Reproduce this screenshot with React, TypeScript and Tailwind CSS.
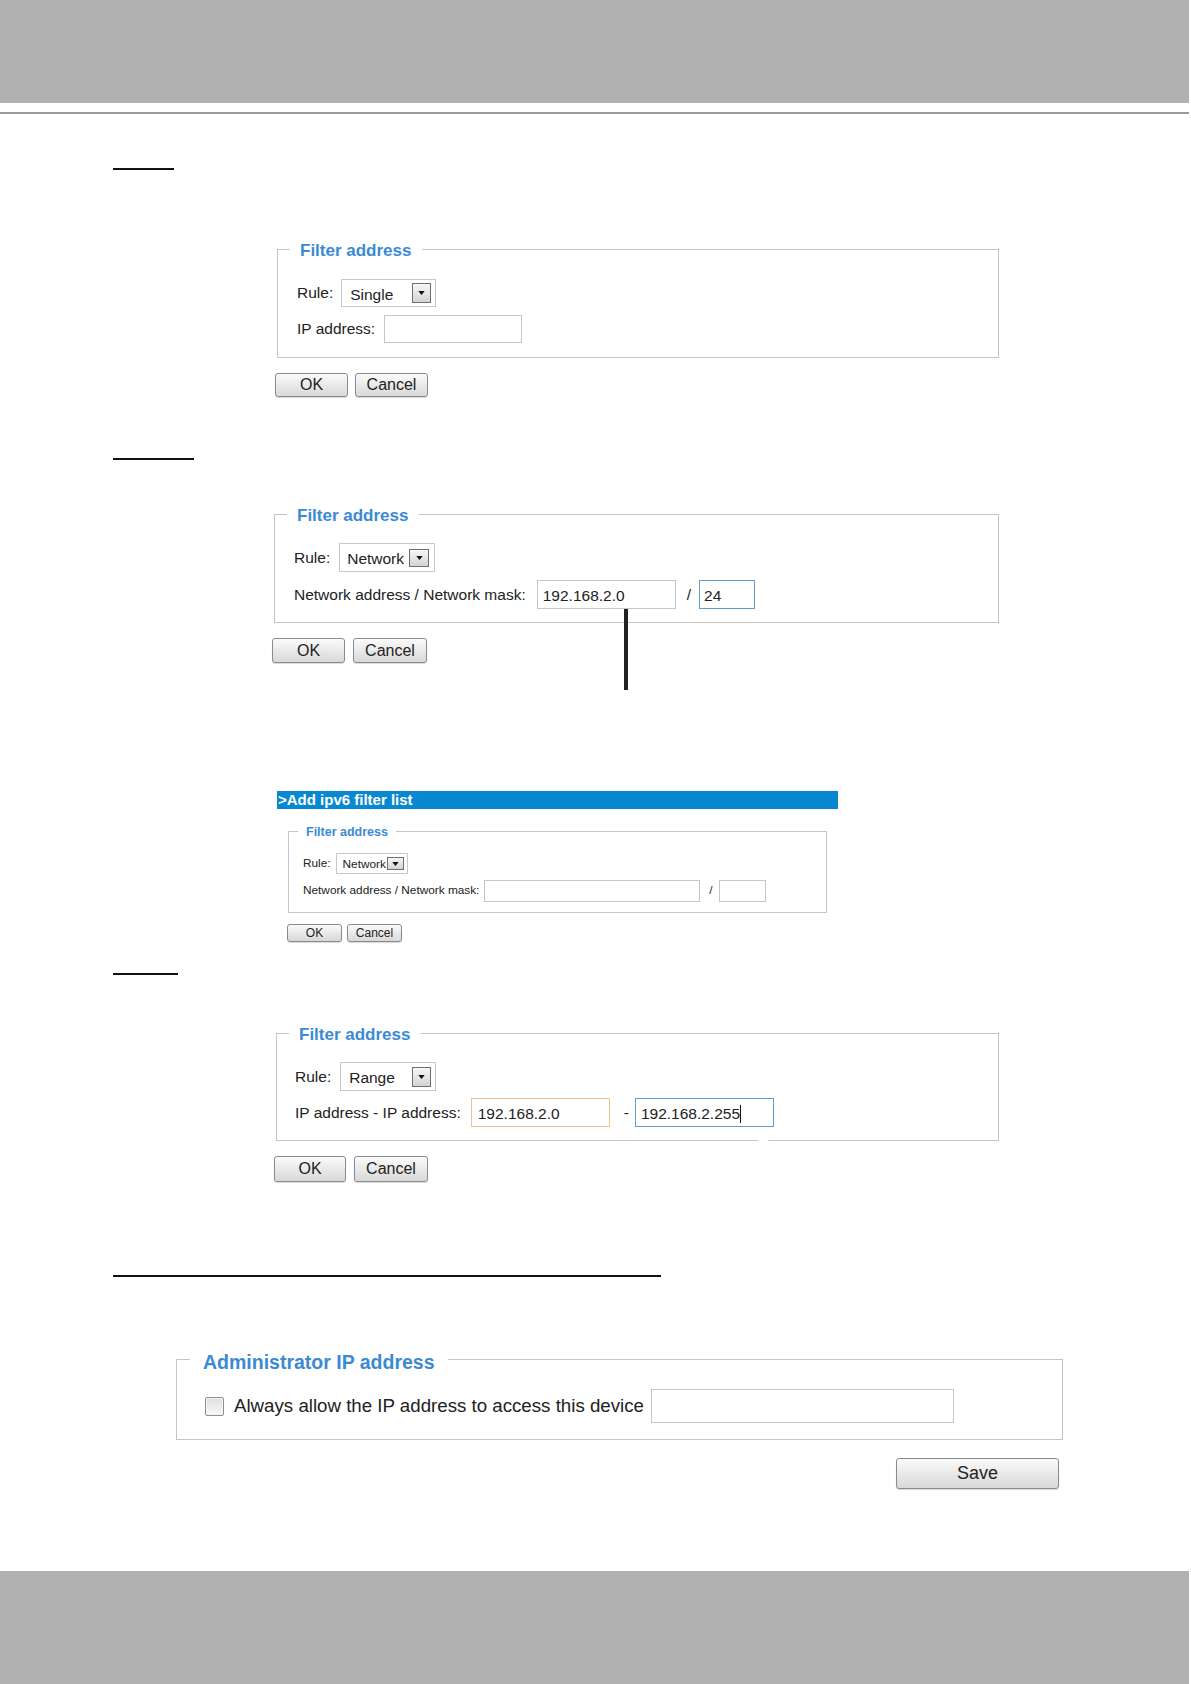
import React from 'react';

function Arrow({ cls }: { cls: string }) {
  return (
    <span
      className={`flex shrink-0 items-center justify-center border border-[#6f6f6f] bg-linear-to-b from-[#f7f7f7] to-[#d4d4d4] ${cls}`}
    >
      <svg viewBox="0 0 8 5" className="w-[7px] h-[4px]">
        <polygon points="0,0 8,0 4,5" fill="#111" />
      </svg>
    </span>
  );
}

function Select({
  text,
  cls,
  textCls,
  arrowCls,
}: {
  text: string;
  cls: string;
  textCls: string;
  arrowCls: string;
}) {
  return (
    <div className={`flex items-center border border-[#c8c8c8] bg-white ${cls}`}>
      <span className={`flex-1 overflow-hidden whitespace-nowrap ${textCls}`}>{text}</span>
      <Arrow cls={arrowCls} />
    </div>
  );
}

function Btn({ children, cls }: { children: React.ReactNode; cls: string }) {
  return (
    <button
      className={`flex items-center justify-center border border-[#8a8a8a] rounded-[3px] bg-linear-to-b from-[#fbfbfb] to-[#d8d8d8] text-[#222] shadow-[0_1px_1px_rgba(0,0,0,0.15)] ${cls}`}
    >
      {children}
    </button>
  );
}

export default function App() {
  return (
    <div className="w-[1191px] min-h-[1684px] bg-white flex flex-col font-['Liberation_Sans',Arial,sans-serif] text-[#222]">
      {/* top band */}
      <div className="h-[103px] mr-[2px] bg-[#b1b1b1]" />
      <div className="mt-[9px] mr-[2px] h-[2px] bg-[#9a9a9a]" />

      {/* Single */}
      <div className="mt-[54px] ml-[113px] w-[61px] h-[2px] bg-[#111]" />
      <div className="ml-[275px]">
        <fieldset className="ml-[2px] mt-[69px] w-[722px] border border-[#c4c4c4]">
          <legend className="ml-[12px] px-[10px] text-[17px] leading-[20px] font-bold text-[#3b8ad4]">
            <span className="relative top-[2px]">Filter address</span>
          </legend>
          <div className="pt-[20px] pb-[14px] pl-[19px] text-[15.5px]">
            <div className="flex items-center h-[28px]">
              <span>Rule:</span>
              <Select
                text="Single"
                cls="ml-[8px] w-[95px] h-[28px]"
                textCls="pl-[8px] pt-[3px]"
                arrowCls="w-[19px] h-[20px] mr-[4px]"
              />
            </div>
            <div className="flex items-center mt-[8px] h-[28px]">
              <span>IP address:</span>
              <div className="ml-[9px] w-[138px] h-[28px] border border-[#c6c6c6] bg-white" />
            </div>
          </div>
        </fieldset>
        <div className="flex gap-[7px] mt-[15px] text-[16px]">
          <Btn cls="w-[73px] h-[24px]">OK</Btn>
          <Btn cls="w-[73px] h-[24px]">Cancel</Btn>
        </div>
      </div>

      {/* Network */}
      <div className="mt-[61px] ml-[113px] w-[81px] h-[2px] bg-[#111]" />
      <div className="ml-[272px]">
        <fieldset className="ml-[2px] mt-[44px] w-[725px] border border-[#c4c4c4]">
          <legend className="ml-[12px] px-[10px] text-[17px] leading-[20px] font-bold text-[#3b8ad4]">
            <span className="relative top-[2px]">Filter address</span>
          </legend>
          <div className="pt-[19px] pb-[13px] pl-[19px] text-[15.5px]">
            <div className="flex items-center h-[29px]">
              <span>Rule:</span>
              <Select
                text="Network"
                cls="ml-[9px] w-[96px] h-[29px]"
                textCls="pl-[7px] pt-[2px]"
                arrowCls="w-[20px] h-[18px] mr-[5px]"
              />
            </div>
            <div className="flex items-center mt-[8px] h-[29px]">
              <span>Network address / Network mask:</span>
              <div className="relative ml-[11px] w-[139px] h-[29px] border border-[#c6c6c6] bg-white flex items-center pl-[5px] pt-[3px]">
                192.168.2.0
                <span className="absolute left-[86px] top-[28px] w-[4px] h-[81px] bg-[#222]" />
              </div>
              <span className="ml-[11px]">/</span>
              <div className="ml-[8px] w-[56px] h-[29px] border border-[#5a9fd8] bg-white flex items-center pl-[4px] pt-[3px]">
                24
              </div>
            </div>
          </div>
        </fieldset>
        <div className="flex gap-[8px] mt-[15px] text-[16px]">
          <Btn cls="w-[73px] h-[25px]">OK</Btn>
          <Btn cls="w-[74px] h-[25px]">Cancel</Btn>
        </div>
      </div>

      {/* ipv6 */}
      <div className="mt-[128px] ml-[277px] w-[561px] h-[18px] bg-[#0788d0] text-white text-[15px] leading-[18px] font-bold pl-[1px]">
        &gt;Add ipv6 filter list
      </div>
      <fieldset className="ml-[288px] mt-[15px] w-[539px] border border-[#c4c4c4]">
        <legend className="ml-[9px] px-[8px] text-[12.5px] leading-[15px] font-bold text-[#3b8ad4]">
          <span className="relative top-[1px]">Filter address</span>
        </legend>
        <div className="pt-[14px] pb-[10px] pl-[14px] text-[11.8px]">
          <div className="flex items-center h-[21px]">
            <span>Rule:</span>
            <Select
              text="Network"
              cls="ml-[5px] w-[72px] h-[21px]"
              textCls="pl-[6px] pt-[2px]"
              arrowCls="w-[17px] h-[13px] mr-[3px]"
            />
          </div>
          <div className="flex items-center mt-[6px] h-[22px]">
            <span>Network address / Network mask:</span>
            <div className="ml-[5px] w-[216px] h-[22px] border border-[#c6c6c6] bg-white" />
            <span className="ml-[9px]">/</span>
            <div className="ml-[6px] w-[47px] h-[22px] border border-[#c6c6c6] bg-white" />
          </div>
        </div>
      </fieldset>
      <div className="flex gap-[5px] ml-[287px] mt-[11px] text-[12px]">
        <Btn cls="w-[55px] h-[18px]">OK</Btn>
        <Btn cls="w-[55px] h-[18px]">Cancel</Btn>
      </div>

      {/* Range */}
      <div className="mt-[31px] ml-[113px] w-[65px] h-[2px] bg-[#111]" />
      <div className="ml-[274px]">
        <fieldset className="relative ml-[2px] mt-[48px] w-[723px] border border-[#c4c4c4]">
          <legend className="ml-[12px] px-[10px] text-[17px] leading-[20px] font-bold text-[#3b8ad4]">
            <span className="relative top-[2px]">Filter address</span>
          </legend>
          <div className="pt-[19px] pb-[13px] pl-[18px] text-[15.5px]">
            <div className="flex items-center h-[29px]">
              <span>Rule:</span>
              <Select
                text="Range"
                cls="ml-[9px] w-[96px] h-[29px]"
                textCls="pl-[8px] pt-[3px]"
                arrowCls="w-[19px] h-[20px] mr-[4px]"
              />
            </div>
            <div className="flex items-center mt-[7px] h-[29px]">
              <span>IP address - IP address:</span>
              <div className="ml-[10px] w-[139px] h-[29px] border border-[#f0c08e] bg-white flex items-center pl-[6px] pt-[3px]">
                192.168.2.0
              </div>
              <span className="ml-[14px]">-</span>
              <div className="ml-[6px] w-[139px] h-[29px] border border-[#5a9fd8] bg-white flex items-center pl-[5px] pt-[3px]">
                192.168.2.255
                <span className="inline-block w-[1px] h-[18px] bg-[#111]" />
              </div>
            </div>
          </div>
          <span className="absolute left-[481px] bottom-[-1px] w-[10px] h-[1px] bg-white" />
        </fieldset>
        <div className="flex gap-[8px] mt-[15px] text-[16px]">
          <Btn cls="w-[72px] h-[26px]">OK</Btn>
          <Btn cls="w-[74px] h-[26px]">Cancel</Btn>
        </div>
      </div>

      {/* Administrator IP address */}
      <div className="mt-[93px] ml-[113px] w-[548px] h-[2px] bg-[#111]" />
      <div className="ml-[176px] w-[887px]">
        <fieldset className="mt-[70px] w-[887px] border border-[#c4c4c4]">
          <legend className="ml-[13px] px-[13px] text-[19.5px] leading-[24px] font-bold text-[#3b8ad4]">
            <span className="relative top-[3px]">Administrator IP address</span>
          </legend>
          <div className="pt-[18px] pb-[16px] pl-[28px] flex items-center text-[18.7px]">
            <span className="w-[19px] h-[19px] rounded-[2px] border border-[#8f8f8f] bg-linear-to-b from-[#dedede] to-[#f9f9f9] shadow-[inset_0_0_0_1px_#f4f4f4]" />
            <span className="ml-[10px]">Always allow the IP address to access this device</span>
            <div className="ml-[7px] w-[303px] h-[34px] border border-[#c6c6c6] bg-white" />
          </div>
        </fieldset>
        <div className="flex justify-end mt-[18px] mr-[4px]">
          <Btn cls="w-[163px] h-[31px] text-[18px]">Save</Btn>
        </div>
      </div>

      {/* bottom band */}
      <div className="mt-auto h-[113px] mr-[2px] bg-[#b1b1b1]" />
    </div>
  );
}
